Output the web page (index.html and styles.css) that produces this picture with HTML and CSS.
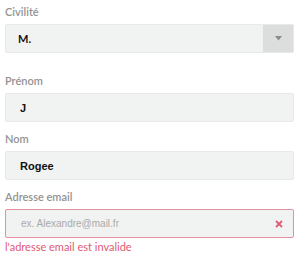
FILE: index.html
```html
<!DOCTYPE html>
<html lang="fr">
<head>
<meta charset="utf-8">
<link rel="stylesheet" href="styles.css">
</head>
<body>
<form class="form">
  <div class="field field-select">
    <label class="label">Civilité</label>
    <div class="select">
      <span class="value value-lato">M.</span>
      <span class="select-btn">
        <svg width="7" height="5" viewBox="0 0 7 5"><path d="M0 0H7L3.5 4.5Z" fill="#8a8a8a"/></svg>
      </span>
    </div>
  </div>
  <div class="field">
    <label class="label">Prénom</label>
    <div class="input"><span class="value">J</span></div>
  </div>
  <div class="field">
    <label class="label">Nom</label>
    <div class="input"><span class="value">Rogee</span></div>
  </div>
  <div class="field">
    <label class="label">Adresse email</label>
    <div class="input input-error">
      <span class="placeholder">ex. Alexandre@mail.fr</span>
      <svg class="clear" width="8" height="8" viewBox="0 0 8 8"><path d="M1 1L7 7M7 1L1 7" stroke="#de5b79" stroke-width="1.8"/></svg>
    </div>
    <div class="error">l'adresse email est invalide</div>
  </div>
</form>
</body>
</html>
```
FILE: styles.css
```css
html, body {
  margin: 0;
  padding: 0;
  background: #fff;
}
.form {
  width: 289px;
  padding: 5px 0 0 5px;
  font-family: Lato, "Liberation Sans", sans-serif;
}
.field {
  display: flex;
  flex-direction: column;
}
.field + .field {
  margin-top: 10px;
}
.field-select + .field {
  margin-top: 21px;
}
.label {
  font-size: 11px;
  line-height: 14px;
  font-weight: 600;
  color: #939393;
  margin-bottom: 5px;
}
.select, .input {
  height: 29px;
  box-sizing: border-box;
  background: #f1f2f2;
  border: 1px solid #e8e9e9;
  border-radius: 2px;
  display: flex;
  align-items: center;
}
.value {
  padding-left: 14px;
  font-family: "Liberation Sans", Arial, sans-serif;
  font-weight: bold;
  font-size: 11px;
  color: #111;
}
.value-lato {
  font-family: Lato, sans-serif;
  padding-left: 12px;
}
.select .value {
  flex: 1;
}
.select-btn {
  width: 30px;
  height: 100%;
  background: #dcdddd;
  display: flex;
  align-items: center;
  justify-content: center;
}
.input-error {
  border-color: #e5909f;
  justify-content: space-between;
  padding-right: 10px;
}
.placeholder {
  padding-left: 15px;
  font-family: "Liberation Sans", Arial, sans-serif;
  font-size: 10px;
  color: #aaa;
}
.error {
  margin-top: 2px;
  font-size: 11px;
  line-height: 14px;
  color: #de5a75;
}
```
